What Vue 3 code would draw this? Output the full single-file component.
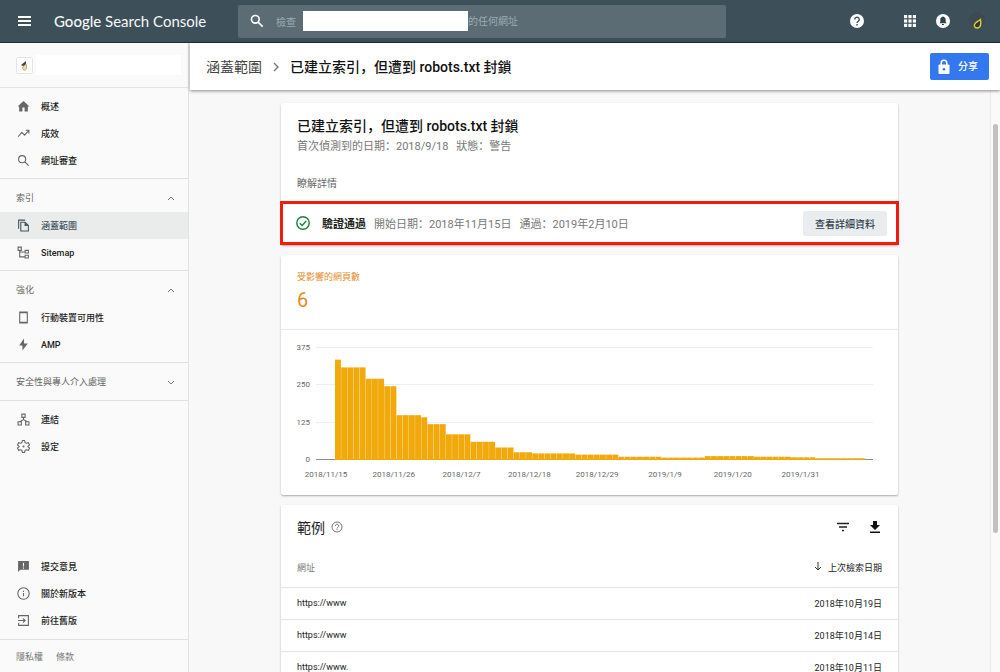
<script setup>
import { computed, ref } from 'vue'

const icons = {
  home: [{ d: 'M10 21v-7h4v7h6v-9h3L12 2 1 12h3v9z', fill: true }],
  trend: [{ d: 'M2 18l7-8 5 5 7-8M16 6h6v6' }],
  search: [{ d: 'M9.500 3a6.500 6.500 0 1 0 0 13a6.500 6.500 0 1 0 0-13zM14.500 14.500l7 7' }],
  copy: [{ d: 'M3 18V2h12M7 6h8l6 6v10H7z' }, { d: 'M14 6v7h7z', fill: true }],
  tree: [{ d: 'M2 2h6v6H2zM15 8h6v5h-6zM15 17h6v5h-6zM5 8v12h10M5 11h10' }],
  phone: [{ d: 'M5 2h14v20H5zM5 3h14M5 21h14' }],
  bolt: [{ d: 'M13 1L4 14h6v9l10-13h-7z', fill: true }],
  links: [{ d: 'M9 2h6v6H9zM2 16h6v6H2zM16 16h6v6h-6zM12 8v5M5 16l7-4 7 4' }],
  gear: [
    { d: 'M10 1h4l1 4 2 1 4-1 2 4-3 3 3 3-2 4-4-1-2 1-1 4h-4l-1-4-2-1-4 1-2-4 3-3-3-3 2-4 4 1 2-1z' },
    { d: 'M12 10a2 2 0 1 0 0 4a2 2 0 1 0 0-4z', fill: true }
  ],
  feedback: [{ d: 'M22 2H2v20l4-4h16zM13 14h-2v2h2zM13 5h-2v7h2z', fill: true }],
  info: [{ d: 'M12 1.500a10.500 10.500 0 1 0 0 21a10.500 10.500 0 1 0 0-21zM12 11v6M12 7v2' }],
  exit: [{ d: 'M3 8V3h18v18H3v-5M2 12h13M11 8l4 4-4 4' }]
}

const overview = [
  { label: '概述', icon: 'home' },
  { label: '成效', icon: 'trend' },
  { label: '網址審查', icon: 'search' }
]
const groups = ref([
  { title: '索引', open: true, items: [{ label: '涵蓋範圍', icon: 'copy', active: true }, { label: 'Sitemap', icon: 'tree' }] },
  { title: '強化', open: true, items: [{ label: '行動裝置可用性', icon: 'phone' }, { label: 'AMP', icon: 'bolt' }] },
  { title: '安全性與專人介入處理', open: false, items: [] }
])
const tools = [{ label: '連結', icon: 'links' }, { label: '設定', icon: 'gear' }]
const support = [
  { label: '提交意見', icon: 'feedback' },
  { label: '關於新版本', icon: 'info' },
  { label: '前往舊版', icon: 'exit' }
]
const navLists = computed(() => [
  { key: 'overview', items: overview },
  ...groups.value.map((g) => ({ key: g.title, group: g, items: g.open ? g.items : [] })),
  { key: 'tools', items: tools }
])

const runs = [
  [336, 1], [310, 4], [272, 3], [247, 2], [150, 4], [143, 1], [120, 3], [86, 4], [61, 4], [42, 3],
  [26, 3], [22, 7], [18, 7], [11, 7], [8, 7], [13, 8], [11, 6], [9, 4], [6, 8]
]
const pitch = 530 / 86
const baseline = 129
const bars = runs
  .flatMap(([value, days]) => Array(days).fill(value))
  .map((value, i) => ({ x: 54 + i * pitch, h: (value / 375) * 112 }))
const ticks = [375, 250, 125, 0].map((value) => ({ value, y: baseline - Math.round((value / 375) * 112) }))
const dates = ['2018/11/15', '2018/11/26', '2018/12/7', '2018/12/18', '2018/12/29', '2019/1/9', '2019/1/20', '2019/1/31']

const rows = [
  { url: 'https://www', date: '2018年10月19日' },
  { url: 'https://www', date: '2018年10月14日' },
  { url: 'https://www.', date: '2018年10月11日' }
]
</script>

<template>
  <div class="app">
    <header class="topbar">
      <button class="icon-btn menu" aria-label="主選單">
        <svg width="14" height="12" viewBox="0 0 14 12"><path d="M1 2h13M1 6h13M1 10h13" stroke="#fff" stroke-width="2" /></svg>
      </button>
      <a class="brand" href="#"><b>Google</b> Search Console</a>
      <form class="search" @submit.prevent>
        <svg width="16" height="16" viewBox="0 0 24 24" fill="none" stroke="#fff" stroke-width="2.500">
          <circle cx="9.500" cy="9.500" r="5.800" /><path d="M14 14l6.500 6.500" />
        </svg>
        <label for="inspect">檢查</label>
        <span class="redacted"></span>
        <input id="inspect" type="text" placeholder="的任何網址" />
      </form>
      <div class="actions">
        <button class="icon-btn help" aria-label="說明">
          <svg width="14" height="14" viewBox="0 0 14 14">
            <circle cx="7" cy="7" r="7" fill="#fff" />
            <path d="M4.800 5.500a2.200 2.200 0 1 1 3.500 1.700C7.400 7.900 7 8.200 7 9M7 10v1.500" fill="none" stroke="#3d5059" stroke-width="1.400" />
          </svg>
        </button>
        <button class="icon-btn" aria-label="應用程式">
          <svg width="12" height="12" viewBox="0 0 12 12" fill="#fff">
            <template v-for="r in 3" :key="r"><rect v-for="c in 3" :key="c" :x="c * 4.400 - 4.400" :y="r * 4.400 - 4.400" width="3.200" height="3.200" /></template>
          </svg>
        </button>
        <button class="icon-btn" aria-label="通知">
          <svg width="14" height="14" viewBox="0 0 14 14">
            <circle cx="7" cy="7" r="7" fill="#fff" />
            <path d="M7 2.500c-1.800.3-2.700 1.700-2.700 3.200v2.300L3.500 9.300h7l-.8-1.300V5.700C9.700 4.200 8.800 2.800 7 2.500zM6 10h2v1H6z" fill="#2f434d" />
          </svg>
        </button>
        <button class="icon-btn" aria-label="帳戶">
          <svg width="20" height="20" viewBox="0 0 20 20">
            <circle cx="10" cy="9" r="8" fill="#3f4a50" />
            <path d="M13.500 8.500c.5 3.500.8 8-3 8.500-3.500.2-4-3-2-5 1.500-1.500 3.200-2 5-3.500z" fill="#33352b" stroke="#d8cd3c" stroke-width="1.400" />
          </svg>
        </button>
      </div>
    </header>

    <div class="body">
      <aside class="sidebar">
        <div class="site">
          <svg width="17" height="17" viewBox="0 0 17 17">
            <rect x=".5" y=".5" width="16" height="16" rx="1" fill="#fff" stroke="#e4e4e4" />
            <path d="M10 4L5 8l2 1 3-1z" fill="#444" /><path d="M10 7c1 3 1 6-1.500 6S6 10 8 9z" fill="#e5dfa5" stroke="#a9a47b" />
          </svg>
          <span class="site-name"></span>
        </div>
        <nav>
          <section v-for="list in navLists" :key="list.key" :class="{ plain: !list.group }">
            <button v-if="list.group" class="group" :aria-expanded="list.group.open" @click="list.group.open = !list.group.open">
              {{ list.group.title }}
              <svg width="8" height="8" viewBox="0 0 8 8" fill="none" stroke="#777"><path :d="list.group.open ? 'M1 6l3-3 3 3' : 'M1 3l3 3 3-3'" /></svg>
            </button>
            <a v-for="item in list.items" :key="item.label" href="#" class="item" :class="{ active: item.active }">
              <svg width="13" height="13" viewBox="0 0 24 24">
                <path v-for="p in icons[item.icon]" :key="p.d" :d="p.d" fill-rule="evenodd" :class="p.fill ? 'solid' : 'line'" />
              </svg>
              {{ item.label }}
            </a>
          </section>
        </nav>
        <section class="plain support">
          <a v-for="item in support" :key="item.label" href="#" class="item">
            <svg width="13" height="13" viewBox="0 0 24 24">
              <path v-for="p in icons[item.icon]" :key="p.d" :d="p.d" fill-rule="evenodd" :class="p.fill ? 'solid' : 'line'" />
            </svg>
            {{ item.label }}
          </a>
        </section>
        <footer class="legal"><a href="#">隱私權</a><a href="#">條款</a></footer>
      </aside>

      <main>
        <div class="crumbs">
          <a href="#">涵蓋範圍</a>
          <svg width="8" height="10" viewBox="0 0 8 10" fill="none" stroke="#777" stroke-width="1.400"><path d="M2 1l4 4-4 4" /></svg>
          <span class="current">已建立索引，但遭到 robots.txt 封鎖</span>
          <button class="share">
            <svg width="12" height="16" viewBox="0 0 12 16">
              <path d="M3.200 7V4a2.800 2.800 0 0 1 5.600 0v3" fill="none" stroke="#fff" stroke-width="1.500" />
              <rect x=".5" y="5.500" width="11" height="9.500" rx="1" fill="#fff" /><circle cx="6" cy="10.200" r="1.300" fill="#3478ef" />
            </svg>
            分享
          </button>
        </div>

        <div class="viewport">
          <div class="content">
            <article class="card issue">
              <div class="issue-head">
                <h1>已建立索引，但遭到 robots.txt 封鎖</h1>
                <p class="meta"><span>首次偵測到的日期：2018/9/18</span><span>狀態：警告</span></p>
                <a class="learn" href="#">瞭解詳情</a>
              </div>
              <div class="validation">
                <svg width="14" height="14" viewBox="0 0 14 14" fill="none" stroke="#1e7f3c" stroke-width="1.400">
                  <circle cx="7" cy="7" r="6.200" /><path d="M3.800 7.200l2.300 2.300 4.200-4.500" />
                </svg>
                <strong>驗證通過</strong>
                <span>開始日期：2018年11月15日</span>
                <span>通過：2019年2月10日</span>
                <button class="details">查看詳細資料</button>
              </div>
            </article>

            <article class="card">
              <div class="metric">
                <h2>受影響的網頁數</h2>
                <p>6</p>
              </div>
              <svg class="chart" viewBox="0 0 617 165" role="img" aria-label="受影響的網頁數">
                <g v-for="t in ticks" :key="t.value">
                  <rect x="35" :y="t.y" width="557" height="1" :fill="t.value ? '#eeeeee' : '#8d8d8d'" />
                  <text x="29" :y="t.y + 3" text-anchor="end">{{ t.value }}</text>
                </g>
                <rect v-for="(b, i) in bars" :key="i" :x="b.x" :y="baseline + 1 - b.h" :width="pitch - 0.25" :height="b.h" fill="#f2a90b" />
                <text v-for="(d, i) in dates" :key="d" :x="45 + i * 11 * pitch" y="147" text-anchor="middle">{{ d }}</text>
              </svg>
            </article>

            <article class="card">
              <div class="examples-head">
                <h2>範例</h2>
                <button class="icon-btn" aria-label="說明">
                  <svg width="12" height="12" viewBox="0 0 12 12" fill="none" stroke="#777">
                    <circle cx="6" cy="6" r="5" /><path d="M4.300 4.900a1.700 1.700 0 1 1 2.700 1.400C6.300 6.800 6 7 6 7.500M6 8.200v1" />
                  </svg>
                </button>
                <span class="spacer"></span>
                <button class="icon-btn" aria-label="篩選">
                  <svg width="12" height="12" viewBox="0 0 12 12"><path d="M0 2.500h12M2 6h8M5 9.500h2" stroke="#222" stroke-width="1.400" /></svg>
                </button>
                <button class="icon-btn" aria-label="下載">
                  <svg width="12" height="12" viewBox="0 0 12 12" fill="#111"><path d="M4 0h4v4h3L6 9 1 4h3zM1 10.500h10V12H1z" /></svg>
                </button>
              </div>
              <table>
                <thead>
                  <tr>
                    <th>網址</th>
                    <th class="sorted">
                      <svg width="8" height="9" viewBox="0 0 8 9" fill="none" stroke="#333"><path d="M4 0v8M1 5l3 3 3-3" /></svg>上次檢索日期
                    </th>
                  </tr>
                </thead>
                <tbody>
                  <tr v-for="row in rows" :key="row.date"><td>{{ row.url }}</td><td>{{ row.date }}</td></tr>
                </tbody>
              </table>
            </article>
          </div>
          <div class="scrollbar"><i></i></div>
        </div>
      </main>
    </div>
  </div>
</template>

<style>
body { margin: 0; overflow: hidden; }
</style>

<style scoped>
.app {
  display: flex; flex-direction: column; height: 100vh;
  font-family: Roboto, "Noto Sans CJK SC", sans-serif; font-size: 9px; color: #222; background: #f8f8f8;
}
.app * { box-sizing: border-box; }
a { color: inherit; text-decoration: none; }
button { border: 0; padding: 0; background: none; font: inherit; color: inherit; }
h1, h2, p { margin: 0; font-weight: 400; }
svg { display: block; flex: none; }

.topbar { display: flex; align-items: center; height: 43px; padding: 0 13px 0 17px; background: #3d5059; border-bottom: 1px solid #1b2e3b; flex: none; }
.icon-btn { display: flex; align-items: center; justify-content: center; }
.brand { width: 184px; margin-left: 23px; color: #f4f6f7; font: 15px/20px Lato, sans-serif; white-space: nowrap; flex: none; }
.brand b { font-weight: 500; }
.search { display: flex; align-items: center; flex: 0 1 488px; min-width: 0; height: 33px; padding-left: 11px; background: #5b6c74; border-radius: 2px; color: #9dabb1; font-size: 10px; }
.search label { margin-left: 11px; width: 27px; flex: none; }
.redacted { width: 165px; height: 20px; background: #fff; }
.search input { flex: 1; min-width: 0; padding: 0; border: 0; outline: 0; background: none; font: inherit; color: #fff; }
.search input::placeholder { color: #9dabb1; opacity: 1; }
.actions { display: flex; align-items: center; gap: 20px; margin-left: auto; }
.actions .help { margin-right: 20px; }
.actions .icon-btn:last-child { margin-left: -3px; }

.body { display: flex; flex: 1; min-height: 0; }
.sidebar { display: flex; flex-direction: column; width: 189px; flex: none; border-right: 1px solid #e2e2e2; background: #fafafa; }
.site { display: flex; align-items: center; gap: 3px; height: 45px; padding: 0 7px 0 16px; border-bottom: 1px solid #e4e4e4; }
.site-name { flex: 1; height: 20px; background: #fff; }
nav { flex: 1; }
nav section { padding-bottom: 4px; border-bottom: 1px solid #e0e0e0; }
nav section:last-child { border-bottom: 0; }
section.plain { padding-top: 5px; }
.group { display: flex; align-items: center; justify-content: space-between; width: 100%; height: 33px; padding: 4px 13px 0 16px; color: #666; }
.item { display: flex; align-items: center; gap: 11px; height: 27px; padding-left: 17px; font-weight: 500; color: #1c1c1c; }
.item.active { background: #eaebeb; color: #42555f; }
.item svg { color: #666; overflow: visible; }
.item.active svg { color: #42555f; }
.solid { fill: currentColor; }
.line { fill: none; stroke: currentColor; stroke-width: 2; }
.support { padding-bottom: 5px; border-bottom: 1px solid #e0e0e0; }
.legal { display: flex; align-items: center; gap: 13px; height: 32px; padding-left: 16px; color: #777; }

main { display: flex; flex-direction: column; flex: 1; min-width: 0; }
.crumbs { display: flex; align-items: center; height: 47px; flex: none; margin-left: 1px; padding: 0 11px 0 16px; background: #fff; box-shadow: 0 1px 3px rgba(0, 0, 0, .45); font-size: 14px; line-height: 20px; position: relative; white-space: nowrap; }
.crumbs a { color: #444; }
.crumbs > svg { margin: 0 10px; }
.current, h1 { color: #111; font-weight: 500; }
.share { display: flex; align-items: center; gap: 8px; height: 27px; margin-left: auto; padding: 0 11px 0 8px; border-radius: 2px; background: #3478ef; color: #fff; font-size: 10px; font-weight: 500; }

.viewport { display: flex; flex: 1; min-height: 0; overflow: hidden; }
.content { flex: 1; min-width: 0; padding: 13px 16px 0; }
.card { max-width: 617px; margin: 0 auto 10px; background: #fff; border-radius: 2px; box-shadow: 0 1px 2px rgba(0, 0, 0, .32); }
.issue-head { padding: 11px 16px 0; height: 98px; }
h1 { font-size: 14px; line-height: 24px; }
.meta { display: flex; gap: 8px; font-size: 11px; line-height: 18px; color: #777; }
.learn { display: block; margin-top: 19px; font-size: 10px; line-height: 18px; color: #666; }
.validation { display: flex; align-items: center; gap: 8px; height: 44px; margin: 0 -1px; padding: 0 9px 0 13px; border: 3px solid #f31b0c; font-size: 11px; color: #777; white-space: nowrap; }
.validation strong { margin-left: 4px; font-weight: 700; color: #222; }
.details { height: 25px; margin-left: auto; padding: 0 12px; border-radius: 2px; background: #eaedef; color: #33434d; font-size: 10px; font-weight: 500; }

.metric { height: 75px; padding: 14px 16px 0; border-bottom: 1px solid #e8e8e8; color: #e58b25; }
.metric h2 { font-size: 9px; line-height: 16px; }
.metric p { font-size: 20px; line-height: 30px; }
.chart { width: 100%; height: auto; }
.chart text { font-size: 8px; fill: #666; }

.examples-head { display: flex; align-items: center; height: 44px; padding: 0 17px 0 16px; }
.examples-head h2 { margin-right: 6px; font-size: 14px; }
.spacer { flex: 1; }
.spacer + .icon-btn { margin-right: 20px; }
table { width: 100%; border-collapse: collapse; }
th { height: 38px; padding: 0 16px; font-weight: 400; text-align: left; color: #777; }
td { height: 32px; padding: 0 16px; border-top: 1px solid #e4e4e4; color: #222; }
th:last-child, td:last-child { text-align: right; }
.sorted { color: #222; }
.sorted svg { display: inline-block; margin-right: 6px; }
.scrollbar { width: 10px; padding: 34px 2px 0; border-left: 1px solid #ececec; background: #fafafa; }
.scrollbar i { display: block; height: 409px; width: 5px; border-radius: 3px; background: #c1c1c1; }
</style>
